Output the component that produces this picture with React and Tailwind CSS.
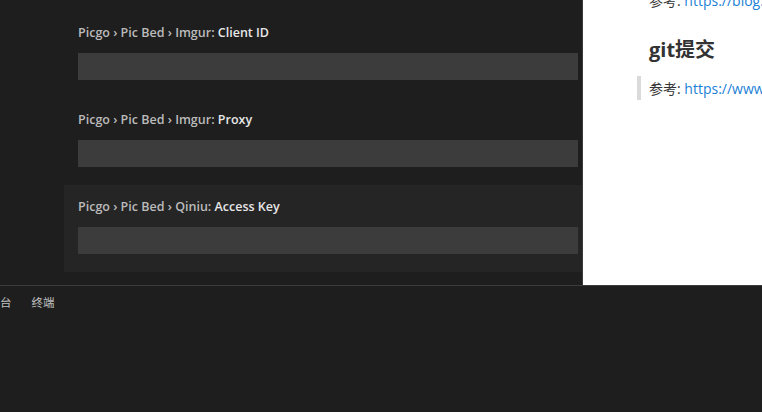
import React from 'react';

const settings = [
  { category: 'Picgo › Pic Bed › Imgur: ', name: 'Client ID' },
  { category: 'Picgo › Pic Bed › Imgur: ', name: 'Proxy' },
  { category: 'Picgo › Pic Bed › Qiniu: ', name: 'Access Key', focused: true },
];

function SettingRow({ category, name, focused }) {
  return (
    <div className={`h-[87px] pl-[14px] pr-[4px] pt-[13px] ${focused ? 'bg-[#252526]' : ''}`}>
      <div className="h-[18px] text-[12.5px] leading-[18px] font-semibold whitespace-nowrap">
        <span className="text-[#bbbbbb]">{category}</span>
        <span className="text-[#e7e7e7]">{name}</span>
      </div>
      <div className="mt-[11px] h-[27px] bg-[#3c3c3c]" />
    </div>
  );
}

export default function App() {
  return (
    <div className="w-[762px] h-[412px] bg-[#1e1e1e] overflow-hidden flex flex-col font-['Open_Sans','Noto_Sans_CJK_SC',sans-serif]">
      <div className="h-[285px] flex shrink-0">
        {/* settings editor */}
        <div className="w-[582px] pl-[64px] pt-[11px] overflow-hidden">
          {settings.map((s) => (
            <SettingRow key={s.name} {...s} />
          ))}
        </div>
        <div className="w-px bg-[#3a3a3a]" />
        {/* markdown preview */}
        <div className="flex-1 bg-white overflow-hidden pl-[66px] text-[#333] text-[14px] whitespace-nowrap">
          <p className="mt-[-10px] leading-[21px]">
            参考: <span className="text-[#1a7fd6]">https://blog.csdn.net</span>
          </p>
          <h2 className="mt-[26px] text-[20px] leading-[26px] font-bold text-[#333]">git提交</h2>
          <div className="mt-[13px] -ml-[12px] border-l-[4px] border-[#dadada] pl-[8px] h-[24px] flex items-center">
            <p className="leading-[21px]">
              参考: <span className="text-[#1a7fd6]">https://www.jianshu.com</span>
            </p>
          </div>
        </div>
      </div>
      {/* bottom panel */}
      <div className="flex-1 border-t border-[#3c3c3c] overflow-hidden">
        <div className="flex pt-[9px] text-[11.5px] leading-[16px] text-[#c0c0c0] whitespace-nowrap">
          <span className="-ml-[23px]">控制台</span>
          <span className="ml-[20px]">终端</span>
        </div>
      </div>
    </div>
  );
}
